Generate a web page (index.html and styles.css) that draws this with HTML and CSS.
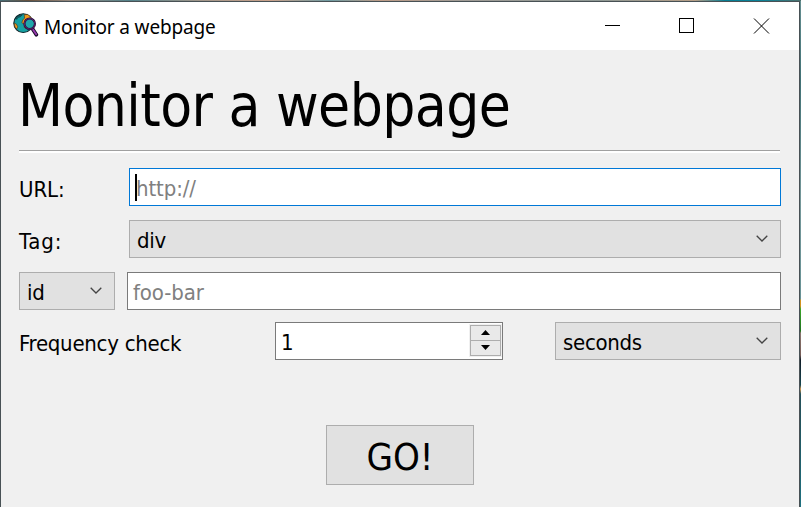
FILE: index.html
```
<!DOCTYPE html>
<html lang="en">
<head>
<meta charset="utf-8">
<title>Monitor a webpage</title>
<link rel="stylesheet" href="styles.css">
</head>
<body>
<div class="window">
  <header class="titlebar">
    <svg class="app-icon" width="26" height="24" viewBox="0 0 28 26">
      <circle cx="11" cy="11" r="10.2" fill="#15a0a2" stroke="#10262b" stroke-width="1.2"/>
      <path d="M12 2l4-.5 4 4-1 5-5 6-2-1 .5-3-3-2 1-3 2-2zM1.2 11l2.4 1 1.4 3-1 2.2-2-2z" fill="#f0981d" stroke="#49391d" stroke-width=".7"/>
      <path d="M3 5l3-2 4-1-2 2-3 1-1 2z" fill="#0b6d75" stroke="#10262b" stroke-width=".6"/>
      <path d="M21 17l4.2 6.500" stroke="#180b28" stroke-width="4" stroke-linecap="round"/>
      <path d="M21 17l4 6" stroke="#9739ae" stroke-width="2" stroke-linecap="round"/>
      <circle cx="18" cy="11.7" r="5.7" fill="#20a7ac" stroke="#250c36" stroke-width="2.3"/>
      <circle cx="18" cy="11.7" r="5.7" fill="none" stroke="#652a7c" stroke-width=".9"/>
    </svg>
    <span class="caption">Monitor a webpage</span>
    <svg class="controls" width="166" height="16" viewBox="0 0 166 16" fill="none" stroke="#000" shape-rendering="crispEdges">
      <path d="M0 7.500h15M74.500 .5h14v14h-14z"/>
      <path d="M149 .5l15 15M164 .5l-15 15" shape-rendering="auto"/>
    </svg>
  </header>
  <main class="content">
    <h1>Monitor a webpage</h1>
    <div class="rule"></div>
    <div class="row url-row">
      <label>URL:</label>
      <div class="field focused"><i class="caret"></i><span class="hint">http://</span></div>
    </div>
    <div class="row tag-row">
      <label class="tag-label">Tag:</label>
      <div class="field combo"><span>div</span><svg class="chevron" width="12" height="7" viewBox="0 0 12 7"><path d="M.7.7L6 6 11.300.7"/></svg></div>
    </div>
    <div class="row attr-row">
      <div class="field combo"><span>id</span><svg class="chevron" width="12" height="7" viewBox="0 0 12 7"><path d="M.7.7L6 6 11.300.7"/></svg></div>
      <div class="field"><span class="hint">foo-bar</span></div>
    </div>
    <div class="row freq-row">
      <label class="freq-label">Frequency check</label>
      <div class="field spin"><span>1</span>
        <div class="steps">
          <div class="step"><svg width="9" height="5" viewBox="0 0 9 5"><path d="M0 5L4.500 0 9 5z"/></svg></div>
          <div class="step"><svg width="9" height="5" viewBox="0 0 9 5"><path d="M0 0h9L4.500 5z"/></svg></div>
        </div>
      </div>
      <div class="field combo unit"><span>seconds</span><svg class="chevron" width="12" height="7" viewBox="0 0 12 7"><path d="M.7.7L6 6 11.300.7"/></svg></div>
    </div>
    <div class="go"><span>GO!</span></div>
  </main>
</div>
</body>
</html>
```
FILE: styles.css
```
* { box-sizing: border-box; }
body {
  margin: 0;
  height: 507px;
  overflow: hidden;
  padding: 1px 1px 0 0;
  background:
    linear-gradient(90deg, #466e78 0, #67513d 28px, #968a80 70px, #53828a 130px, #a1968a 200px, #c9a18a 270px, #6f9ba2 330px, #bd9c87 380px, #a09c96 460px, #8e9894 600px, #b69e86 695px, #077d93 725px, #0a8298 760px, #4c706d 801px) 0 0 / 100% 1px no-repeat,
    linear-gradient(#668f91 0, #427276 80px, #76989a 200px, #689295 299px, #d29220 300px, #d29220 306px, #3da52c 309px, #20741e 331px, #8b7770 333px, #765d58 355px, #101c27 360px, #174650 385px, #d49a55 389px, #24515b 394px, #24545d 420px, #1f7180 507px);
  font-family: "DejaVu Sans Condensed", "DejaVu Sans", sans-serif;
  font-stretch: condensed;
  font-size: 22px;
  letter-spacing: -.1px;
  color: #000;
}
.window {
  height: 506px;
  border: 1px solid #485155;
  border-bottom: 0;
  background: #f0f0f0;
}
.titlebar {
  height: 48px;
  display: flex;
  align-items: flex-start;
  background: #fff;
  padding: 10px 28px 0 12px;
}
.app-icon { flex: none; margin-top: 1px; }
.caption {
  font: 19px/28px "Noto Sans", sans-serif;
  margin: 1px 0 0 5px;
  letter-spacing: -.15px;
  white-space: nowrap;
}
.controls { margin: 6px 0 0 auto; }
.content { padding: 0 18px; }
h1 {
  margin: 0;
  height: 100px;
  padding-top: 21px;
  font-weight: 400;
  font-size: 58px;
  line-height: 70px;
  letter-spacing: -.55px;
  text-indent: -1px;
  white-space: nowrap;
}
.rule {
  height: 3px;
  width: 761px;
  border-top: 1px solid #a0a0a0;
  background: #fff;
  margin-bottom: 15px;
}
.row { width: 762px; height: 38px; display: grid; line-height: 38px; }
.row label { padding-top: 3px; white-space: nowrap; }
.row .tag-label { letter-spacing: .9px; }
.row .freq-label { letter-spacing: -.27px; }
.url-row, .tag-row { grid-template-columns: 110px 652px; margin-bottom: 14px; }
.attr-row { grid-template-columns: 96px 654px; column-gap: 12px; margin-bottom: 12px; }
.freq-row { grid-template-columns: 256px 228px 52px 226px; }
.unit { grid-column: 4; }
.field {
  height: 38px;
  display: flex;
  align-items: center;
  border: 1px solid #7a7a7a;
  background: #fff;
  padding: 4px 5px 0;
  line-height: 32px;
  white-space: nowrap;
}
.field.focused { border-color: #0078d7; }
.combo {
  justify-content: space-between;
  border-color: #adadad;
  background: #e1e1e1;
  padding: 4px 12px 0 7px;
  letter-spacing: -.3px;
}
.hint { color: #808080; }
.caret { width: 2px; height: 27px; background: #000; margin: -4px -1px 0 0; }
.chevron { fill: none; stroke: #444; stroke-width: 1.3; margin-top: -5px; }
.spin { justify-content: space-between; padding: 4px 2px 0 5px; }
.steps { width: 31px; height: 31px; border: 1px solid #adadad; background: #e9e9e9; outline: 1px solid #f0f0f0; margin-top: -6px; }
.spin .steps { margin-right: -1px; }
.step { height: 14px; display: flex; justify-content: center; align-items: center; }
.step + .step { height: 15px; border-top: 1px solid #adadad; }
.go {
  width: 148px;
  height: 60px;
  margin: 65px auto 0 307px;
  display: flex;
  align-items: center;
  justify-content: center;
  border: 1px solid #adadad;
  background: #e1e1e1;
  font-size: 38px;
  line-height: 56px;
  padding-top: 4px;
}
```
